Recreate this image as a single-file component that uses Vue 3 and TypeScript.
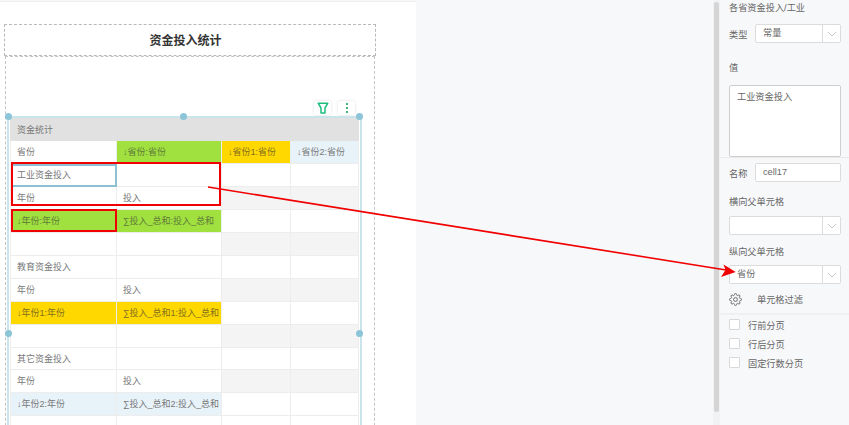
<script setup lang="ts">
interface Cell { text?: string; cls?: string }
interface Row { cells: Cell[]; slim?: boolean }
const rows: Row[] = [
  { cells: [{ text: '省份' }, { text: '↓省份:省份', cls: 'green' }, { text: '↓省份1:省份', cls: 'yellow' }, { text: '↓省份2:省份', cls: 'blue' }] },
  { cells: [{ text: '工业资金投入', cls: 'picked' }, {}, {}, {}] },
  { cells: [{ text: '年份' }, { text: '投入' }, { cls: 'gray' }, { cls: 'gray' }] },
  { cells: [{ text: '↓年份:年份', cls: 'green' }, { text: '∑投入_总和:投入_总和', cls: 'green' }, {}, {}] },
  { cells: [{}, {}, { cls: 'gray' }, { cls: 'gray' }] },
  { cells: [{ text: '教育资金投入' }, {}, {}, {}] },
  { cells: [{ text: '年份' }, { text: '投入' }, { cls: 'gray' }, { cls: 'gray' }] },
  { cells: [{ text: '↓年份1:年份', cls: 'yellow' }, { text: '∑投入_总和1:投入_总和', cls: 'yellow' }, {}, {}] },
  { cells: [{}, {}, { cls: 'gray' }, { cls: 'gray' }] },
  { cells: [{ text: '其它资金投入' }, {}, {}, {}], slim: true },
  { cells: [{ text: '年份' }, { text: '投入' }, { cls: 'gray' }, { cls: 'gray' }] },
  { cells: [{ text: '↓年份2:年份', cls: 'blue' }, { text: '∑投入_总和2:投入_总和', cls: 'blue' }, {}, {}] },
]
const checks: string[] = ['行前分页', '行后分页', '固定行数分页']
</script>

<template>
  <div class="page">
    <main class="canvas">
      <div class="report">
        <h1 class="title">资金投入统计</h1>
        <div class="body">
          <div class="tools">
            <span class="tool">
              <svg width="12" height="12" viewBox="0 0 12 12"><path d="M1.200 1.200H10.800L8 6V11H4V6Z" fill="none" stroke="#1cc07e" stroke-width="1.500" stroke-linejoin="round" /></svg>
            </span>
            <span class="tool">
              <svg width="12" height="12" viewBox="0 0 12 12"><circle cx="6" cy="2" r="1.100" fill="#12a858" /><circle cx="6" cy="6" r="1.100" fill="#12a858" /><circle cx="6" cy="10" r="1.100" fill="#12a858" /></svg>
            </span>
          </div>
          <div class="frame">
            <i class="dot d1"></i><i class="dot d2"></i><i class="dot d3"></i><i class="dot d4"></i><i class="dot d5"></i>
            <table class="sheet">
              <colgroup><col class="c1" /><col class="c2" /><col class="c3" /><col class="c4" /></colgroup>
              <tbody>
                <tr><td colspan="4" class="head">资金统计</td></tr>
                <tr v-for="(row, r) in rows" :key="r" :class="{ slim: row.slim }">
                  <td v-for="(c, i) in row.cells" :key="i" :class="c.cls">{{ c.text }}</td>
                </tr>
                <tr><td></td><td></td><td></td><td></td></tr>
              </tbody>
            </table>
          </div>
        </div>
      </div>
    </main>
    <div class="gutter"><div class="thumb"></div></div>
    <aside class="panel">
      <div class="crumb">各省资金投入/工业</div>
      <div class="line"><label>类型</label><div class="select short"><span>常量</span><b><svg width="10" height="6" viewBox="0 0 10 6"><path d="M1 1l4 4 4-4" fill="none" stroke="#c6c8cc" /></svg></b></div></div>
      <div class="value-label">值</div>
      <div class="textarea">工业资金投入</div>
      <div class="rule"></div>
      <div class="line name"><label>名称</label><div class="input short">cell17</div></div>
      <div class="sub first">横向父单元格</div>
      <div class="select"><span></span><b><svg width="10" height="6" viewBox="0 0 10 6"><path d="M1 1l4 4 4-4" fill="none" stroke="#c6c8cc" /></svg></b></div>
      <div class="sub">纵向父单元格</div>
      <div class="select"><span>省份</span><b><svg width="10" height="6" viewBox="0 0 10 6"><path d="M1 1l4 4 4-4" fill="none" stroke="#c6c8cc" /></svg></b></div>
      <div class="filter">
        <svg width="13" height="13" viewBox="0 0 24 24" fill="none" stroke="#666" stroke-width="1.800"><circle cx="12" cy="12" r="3.500" /><path d="M19.400 15a1.650 1.650 0 0 0 .33 1.820l.06.06a2 2 0 0 1 0 2.830 2 2 0 0 1-2.830 0l-.06-.06a1.650 1.650 0 0 0-1.820-.33 1.650 1.650 0 0 0-1 1.510V21a2 2 0 0 1-2 2 2 2 0 0 1-2-2v-.09A1.650 1.650 0 0 0 9 19.400a1.650 1.650 0 0 0-1.820.33l-.06.06a2 2 0 0 1-2.830 0 2 2 0 0 1 0-2.830l.06-.06a1.650 1.650 0 0 0 .33-1.820 1.650 1.650 0 0 0-1.510-1H3a2 2 0 0 1-2-2 2 2 0 0 1 2-2h.09A1.650 1.650 0 0 0 4.600 9a1.650 1.650 0 0 0-.33-1.820l-.06-.06a2 2 0 0 1 0-2.830 2 2 0 0 1 2.830 0l.06.06a1.650 1.650 0 0 0 1.820.33H9a1.650 1.650 0 0 0 1-1.510V3a2 2 0 0 1 2-2 2 2 0 0 1 2 2v.09a1.650 1.650 0 0 0 1 1.510 1.650 1.650 0 0 0 1.820-.33l.06-.06a2 2 0 0 1 2.830 0 2 2 0 0 1 0 2.830l-.06.06a1.650 1.650 0 0 0-.33 1.820V9a1.650 1.650 0 0 0 1.510 1H21a2 2 0 0 1 2 2 2 2 0 0 1-2 2h-.09a1.650 1.650 0 0 0-1.510 1z" /></svg>
        <span>单元格过滤</span>
      </div>
      <div class="rule thick"></div>
      <div class="check" v-for="c in checks" :key="c"><i></i><span>{{ c }}</span></div>
    </aside>
    <div class="mark m1"></div>
    <div class="mark m2"></div>
    <svg class="arrow" width="849" height="425" viewBox="0 0 849 425">
      <line x1="208" y1="187" x2="726" y2="270" stroke="#f00000" stroke-width="1.600" />
      <path d="M735.700 272L721 277L725.500 270L723.500 264.500Z" fill="#f00000" />
    </svg>
  </div>
</template>

<style>
html, body { margin: 0; background: #f7f8fa; }
</style>

<style scoped>
.page {
  position: relative;
  display: flex;
  width: 849px;
  height: 425px;
  overflow: hidden;
  background: #f7f8fa;
  font-family: "Liberation Sans", "Noto Sans CJK SC", sans-serif;
  font-size: 9.200px;
  color: #666;
}
.canvas {
  width: 416px;
  margin: 1px 297px 0 0;
  padding: 22px 0 0 4px;
  box-sizing: border-box;
  background: #fff;
  border-top: 1px solid #eceef0;
  flex: none;
}
.report { width: 372px; }
.title {
  margin: 0;
  height: 30px;
  line-height: 32px;
  padding-right: 9px;
  border: 1px dashed #b9b9b9;
  text-align: center;
  font-size: 12px;
  font-weight: 700;
  color: #333;
}
.body {
  width: 370px;
  height: 400px;
  margin-left: 1px;
  border: 1px dashed #c4c4c4;
  box-sizing: border-box;
}
.tools { display: flex; justify-content: flex-end; gap: 7px; padding: 44px 19px 0 0; height: 15px; }
.tool {
  width: 17px; height: 14px; display: flex; align-items: center; justify-content: center;
  background: #fff; box-shadow: 0 0 3px rgba(0, 0, 0, .14); border-radius: 2px;
}
.frame {
  position: relative;
  width: 355px;
  height: 400px;
  box-sizing: border-box;
  margin-left: 1px;
  border: 2px solid #c9e4ea;
  border-bottom: 0;
  padding: 0 2px 0 1px;
}
.dot { position: absolute; width: 7px; height: 7px; border-radius: 50%; background: #8cc4d8; }
.d1 { left: -4px; top: -5px; }
.d2 { left: 170.500px; top: -5px; }
.d3 { right: -3px; top: -5px; }
.d4 { left: -4px; top: 212px; }
.d5 { right: -3px; top: 212px; }
.sheet {
  width: 348px;
  table-layout: fixed;
  border-collapse: collapse;
  background: #fff;
}
.c1 { width: 106px; } .c2 { width: 105px; } .c3 { width: 69px; } .c4 { width: 68px; }
td {
  height: 23px;
  padding: 0 0 1px 6px;
  box-sizing: border-box;
  border: 1px solid #ededed;
  white-space: nowrap;
  overflow: hidden;
  font-size: 9px;
  color: #777;
}
.slim td { height: 22px; }
td.head { height: 22px; background: #e1e1e1; border-color: #e1e1e1; }
.green { background: #a0e03f; color: #5f7a3a; }
.yellow { background: #ffd800; color: #7f6f20; }
.blue { background: #e8f2f9; }
.gray { background: #f4f4f4; }
.picked { outline: 2px solid #8cc0d4; outline-offset: -2px; }
.gutter { width: 6px; padding: 2px 1px 0 0; background: #f1f2f3; flex: none; }
.thumb { width: 5px; height: 410px; background: #d5d5d5; border-radius: 3px; margin-left: 1px; }
.panel { width: 129px; flex: none; box-sizing: border-box; padding-left: 9px; color: #666; }
.crumb { height: 14px; line-height: 14px; margin-top: 1px; }
.line { display: flex; align-items: center; margin-top: 9px; }
.line label { width: 26px; flex: none; }
.select {
  display: flex; width: 112px; height: 19px; box-sizing: border-box;
  border: 1px solid #dcdcdc; background: #fff; border-radius: 2px;
}
.select.short { width: 86px; }
.select span { flex: 1; line-height: 17px; padding-left: 7px; }
.select b { width: 17px; border-left: 1px solid #dcdcdc; display: flex; align-items: center; justify-content: center; }
.value-label { margin-top: 18px; height: 14px; line-height: 14px; }
.textarea {
  margin-top: 10px; width: 112px; height: 72px; box-sizing: border-box;
  border: 1px solid #cfcfcf; background: #fff; padding: 3px 7px; border-radius: 2px;
}
.rule { height: 1px; background: #e9e9ec; margin: 0 0 0 -9px; }
.rule.thick { height: 2px; margin-top: 6px; background: #eef0f2; }
.line.name { margin-top: 5px; }
.input {
  width: 86px; height: 19px; box-sizing: border-box; border: 1px solid #dcdcdc; background: #fff;
  line-height: 17px; padding-left: 7px; border-radius: 2px;
}
.sub { height: 14px; line-height: 14px; margin: 10px 0 6px; }
.sub.first { margin: 13px 0 7px; }
.filter { display: flex; align-items: center; gap: 15px; margin-top: 7px; height: 16px; }
.check { display: flex; align-items: center; gap: 8px; height: 19px; }
.check i { width: 9px; height: 9px; border: 1px solid #d9d9d9; background: #fff; border-radius: 1px; }
.mark { position: absolute; border: 2px solid #f00000; box-sizing: border-box; }
.m1 { left: 11px; top: 162px; width: 210px; height: 44px; }
.m2 { left: 11px; top: 209px; width: 106px; height: 23px; }
.arrow { position: absolute; left: 0; top: 0; pointer-events: none; }
</style>
